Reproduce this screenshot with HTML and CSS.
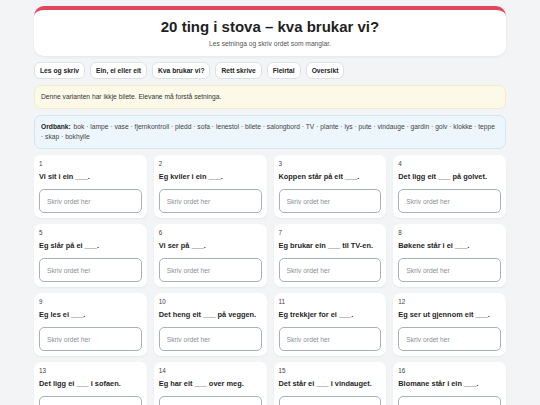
FILE: index.html
```html
<!DOCTYPE html>
<html lang="nn">
<head>
    <meta charset="UTF-8">
    <meta name="viewport" content="width=device-width, initial-scale=1.0">
    <title>20 ting i stova – kva brukar vi?</title>
    <link rel="stylesheet" href="styles.css">
</head>
<body>
    <div class="container">
        <header class="page-header">
            <h1>20 ting i stova – kva brukar vi?</h1>
            <p>Les setninga og skriv ordet som manglar.</p>
        </header>

        <nav class="tabs">
            <button class="tab">Les og skriv</button>
            <button class="tab">Ein, ei eller eit</button>
            <button class="tab">Kva brukar vi?</button>
            <button class="tab">Rett skrive</button>
            <button class="tab">Fleirtal</button>
            <button class="tab">Oversikt</button>
        </nav>

        <div class="notice">Denne varianten har ikkje bilete. Elevane må forstå setninga.</div>

        <div class="wordbank">
            <strong>Ordbank:</strong> bok · lampe · vase · fjernkontroll · pledd · sofa · lenestol · bilete · salongbord · TV · plante · lys · pute · vindauge · gardin · golv · klokke · teppe · skap · bokhylle
        </div>

        <div class="task-grid">
            <div class="task">
                <div class="task-no">1</div>
                <div class="task-text">Vi sit i ein ___.</div>
                <input type="text" placeholder="Skriv ordet her">
            </div>
            <div class="task">
                <div class="task-no">2</div>
                <div class="task-text">Eg kviler i ein ___.</div>
                <input type="text" placeholder="Skriv ordet her">
            </div>
            <div class="task">
                <div class="task-no">3</div>
                <div class="task-text">Koppen står på eit ___.</div>
                <input type="text" placeholder="Skriv ordet her">
            </div>
            <div class="task">
                <div class="task-no">4</div>
                <div class="task-text">Det ligg eit ___ på golvet.</div>
                <input type="text" placeholder="Skriv ordet her">
            </div>
            <div class="task">
                <div class="task-no">5</div>
                <div class="task-text">Eg slår på ei ___.</div>
                <input type="text" placeholder="Skriv ordet her">
            </div>
            <div class="task">
                <div class="task-no">6</div>
                <div class="task-text">Vi ser på ___.</div>
                <input type="text" placeholder="Skriv ordet her">
            </div>
            <div class="task">
                <div class="task-no">7</div>
                <div class="task-text">Eg brukar ein ___ til TV-en.</div>
                <input type="text" placeholder="Skriv ordet her">
            </div>
            <div class="task">
                <div class="task-no">8</div>
                <div class="task-text">Bøkene står i ei ___.</div>
                <input type="text" placeholder="Skriv ordet her">
            </div>
            <div class="task">
                <div class="task-no">9</div>
                <div class="task-text">Eg les ei ___.</div>
                <input type="text" placeholder="Skriv ordet her">
            </div>
            <div class="task">
                <div class="task-no">10</div>
                <div class="task-text">Det heng eit ___ på veggen.</div>
                <input type="text" placeholder="Skriv ordet her">
            </div>
            <div class="task">
                <div class="task-no">11</div>
                <div class="task-text">Eg trekkjer for ei ___.</div>
                <input type="text" placeholder="Skriv ordet her">
            </div>
            <div class="task">
                <div class="task-no">12</div>
                <div class="task-text">Eg ser ut gjennom eit ___.</div>
                <input type="text" placeholder="Skriv ordet her">
            </div>
            <div class="task">
                <div class="task-no">13</div>
                <div class="task-text">Det ligg ei ___ i sofaen.</div>
                <input type="text" placeholder="Skriv ordet her">
            </div>
            <div class="task">
                <div class="task-no">14</div>
                <div class="task-text">Eg har eit ___ over meg.</div>
                <input type="text" placeholder="Skriv ordet her">
            </div>
            <div class="task">
                <div class="task-no">15</div>
                <div class="task-text">Det står ei ___ i vindauget.</div>
                <input type="text" placeholder="Skriv ordet her">
            </div>
            <div class="task">
                <div class="task-no">16</div>
                <div class="task-text">Blomane står i ein ___.</div>
                <input type="text" placeholder="Skriv ordet her">
            </div>
            <div class="task">
                <div class="task-no">17</div>
                <div class="task-text">Vi tenner eit ___.</div>
                <input type="text" placeholder="Skriv ordet her">
            </div>
            <div class="task">
                <div class="task-no">18</div>
                <div class="task-text">Vi går på ___-et.</div>
                <input type="text" placeholder="Skriv ordet her">
            </div>
            <div class="task">
                <div class="task-no">19</div>
                <div class="task-text">Ei ___ heng på veggen.</div>
                <input type="text" placeholder="Skriv ordet her">
            </div>
            <div class="task">
                <div class="task-no">20</div>
                <div class="task-text">Glasa står i eit ___.</div>
                <input type="text" placeholder="Skriv ordet her">
            </div>
        </div>
    </div>
</body>
</html>
```

FILE: styles.css
```css
/* Page */
body, html {
    margin: 0;
    padding: 0;
    background: #f3f4f6;
    font-family: "Liberation Sans", Arial, sans-serif;
    color: #222;
}

.container {
    max-width: 472px;
    margin: 0 auto;
    padding: 6px 0;
}

/* Header card with the red top line */
.page-header {
    background: #fff;
    border-top: 4px solid #e0475c;
    border-radius: 10px;
    padding: 8px 12px;
    text-align: center;
    box-shadow: 0 1px 3px rgba(0, 0, 0, 0.06);
}

.page-header h1 {
    margin: 0;
    font-size: 15px;
    line-height: 18px;
    color: #1f1f1f;
}

.page-header p {
    margin: 3px 0 0;
    font-size: 6.7px;
    line-height: 9px;
    color: #555;
}

/* Variant buttons */
.tabs {
    display: flex;
    gap: 5px;
    margin-top: 6px;
}

.tab {
    font-family: inherit;
    font-size: 6.7px;
    font-weight: bold;
    line-height: 9px;
    color: #222;
    background: #fff;
    border: 1px solid #dde2e8;
    border-radius: 6px;
    padding: 3px 5px;
    cursor: pointer;
}

.tab:hover {
    background: #f7f8fa;
}

/* Info boxes */
.notice {
    margin-top: 6px;
    padding: 6px 6px;
    font-size: 6.7px;
    line-height: 10px;
    color: #333;
    background: #fdf9e9;
    border: 1px solid #f3ecc8;
    border-radius: 7px;
}

.wordbank {
    margin-top: 6px;
    padding: 6px 6px;
    font-size: 6.7px;
    line-height: 10px;
    color: #444;
    background: #edf5fd;
    border: 1px solid #d6e5f4;
    border-radius: 7px;
}

.wordbank strong {
    color: #222;
    margin-right: 1px;
}

/* Task cards */
.task-grid {
    display: grid;
    grid-template-columns: repeat(4, 1fr);
    column-gap: 7px;
    row-gap: 6px;
    margin-top: 6px;
}

.task {
    background: #fff;
    border-radius: 7px;
    padding: 4px 5px 5px;
    box-shadow: 0 1px 2px rgba(0, 0, 0, 0.05);
}

.task-no {
    font-size: 6.3px;
    line-height: 9px;
    color: #444;
}

.task-text {
    margin-top: 4px;
    font-size: 7.4px;
    font-weight: bold;
    line-height: 10px;
    color: #1f1f1f;
}

.task input[type="text"] {
    display: block;
    box-sizing: border-box;
    width: 100%;
    height: 24px;
    margin-top: 7px;
    padding: 0 7px;
    font-family: inherit;
    font-size: 6.7px;
    border: 1.5px solid #a9b0ba;
    border-radius: 5px;
    background: #fff;
}

.task input::placeholder {
    color: #8a8f97;
}
```
